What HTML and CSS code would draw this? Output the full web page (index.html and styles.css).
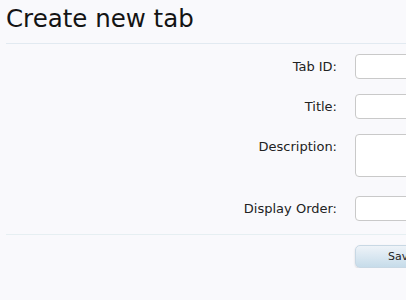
FILE: index.html
```html
<!DOCTYPE html>
<html lang="en">
<head>
    <meta charset="UTF-8">
    <title>Create new tab</title>
    <link rel="stylesheet" href="styles.css">
</head>
<body>
    <h1 class="title">Create new tab</h1>
    <form class="tab-form">
        <div class="row">
            <label for="tabId">Tab ID:</label>
            <input type="text" id="tabId">
        </div>
        <div class="row">
            <label for="tabTitle">Title:</label>
            <input type="text" id="tabTitle">
        </div>
        <div class="row top">
            <label for="tabDesc">Description:</label>
            <textarea id="tabDesc"></textarea>
        </div>
        <div class="row last">
            <label for="tabOrder">Display Order:</label>
            <input type="text" id="tabOrder">
        </div>
        <div class="submit-row">
            <button type="button" class="save">Save Tab</button>
        </div>
    </form>
</body>
</html>
```

FILE: styles.css
```css
html {
    overflow: hidden;
}
body {
    margin: 0;
    background: #f9f9fc;
    font-family: "DejaVu Sans", Verdana, sans-serif;
    color: #141414;
}
.title {
    margin: 0 0 0 6px;
    padding: 5px 0 10px;
    font-family: "DejaVu Sans", sans-serif;
    font-weight: normal;
    font-size: 24.5px;
    line-height: 28px;
    border-bottom: 1px solid #e2eaf1;
}
.tab-form {
    margin-left: 6px;
    padding-top: 10px;
}
.row {
    display: grid;
    grid-template-columns: 331px 220px;
    column-gap: 18px;
    align-items: center;
    margin-bottom: 15px;
}
.row.top {
    align-items: start;
    margin-bottom: 19px;
}
.row.top label {
    padding-top: 5px;
}
.row.last {
    margin-bottom: 0;
    padding-bottom: 13px;
    border-bottom: 1px solid #e6eff2;
}
label {
    text-align: right;
    font-size: 13px;
    color: #222;
}
input, textarea {
    box-sizing: border-box;
    height: 25px;
    background: #fff;
    border: 1px solid #c9c9c9;
    border-radius: 4px;
    margin: 0;
}
textarea {
    height: 43px;
    resize: none;
}
.submit-row {
    padding: 10px 0 0 349px;
}
.save {
    width: 110px;
    height: 23px;
    padding: 0 0 0 32px;
    text-align: left;
    font-family: "DejaVu Sans", sans-serif;
    font-size: 11px;
    color: #222;
    border: 1px solid #c8d8e4;
    border-radius: 5px;
    background: linear-gradient(#eef3f8, #c6dcea);
    box-shadow: 0 1px 2px rgba(0,0,0,0.15);
}
```
